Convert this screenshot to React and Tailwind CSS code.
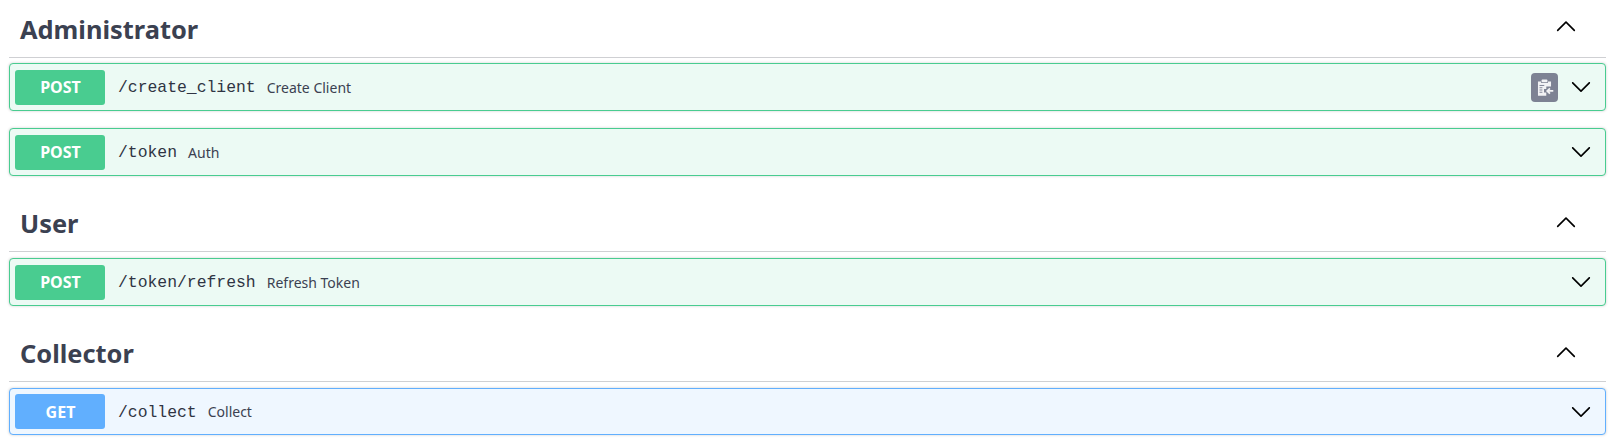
const sans = "font-['Noto_Sans','Noto_Sans_CJK_KR',sans-serif]";

function Chevron({ up, className }) {
  return (
    <svg viewBox="0 0 20 20" className={className} fill="currentColor">
      {up ? (
        <path d="M 17.418 14.908 C 17.69 14.634 17.69 14.19 17.418 13.917 L 10.493 6.992 C 10.22 6.719 9.78 6.719 9.507 6.992 L 2.582 13.917 C 2.31 14.19 2.31 14.634 2.582 14.908 C 2.855 15.18 3.295 15.18 3.568 14.908 L 10 8.48 L 16.432 14.908 C 16.705 15.18 17.145 15.18 17.418 14.908 Z" />
      ) : (
        <path d="M 17.418 6.109 C 17.69 6.383 17.69 6.827 17.418 7.1 L 10.493 14.025 C 10.22 14.298 9.78 14.298 9.507 14.025 L 2.582 7.1 C 2.31 6.827 2.31 6.383 2.582 6.109 C 2.855 5.837 3.295 5.837 3.568 6.109 L 10 12.537 L 16.432 6.109 C 16.705 5.837 17.145 5.837 17.418 6.109 Z" />
      )}
    </svg>
  );
}

function Clip() {
  return (
    <span className="w-[27px] h-[29px] rounded-[4px] bg-[#7d8293] flex items-center justify-center mr-[11px]">
      <svg viewBox="0 0 16 16" className="w-[19px] h-[19px]" fill="none">
        <path d="M2.5 3h2.7v1.2h5.6V3h2.7v4.2H9.5v2H7.6v3h1.9V15H2.500z" fill="#f1f2f4" />
        <rect x="5.6" y="1.2" width="4.8" height="2.4" rx="0.6" fill="#f1f2f4" />
        <path d="M3.800 6.300h4M3.800 8.200h2.400M3.800 10.100h2.400M3.800 12h2.400" stroke="#7d8293" strokeWidth="0.8" />
        <path d="M15.4 10.900h-4.600M12.600 8.700l-2.300 2.200 2.300 2.200" stroke="#f1f2f4" strokeWidth="1.500" />
      </svg>
    </span>
  );
}

function Op({ method, path, desc, copy, mb = "mb-[18px]", h = "h-[48px]" }) {
  const get = method === "GET";
  return (
    <div
      className={`flex items-center pl-[5px] pr-[10px] rounded-[4px] border shadow-[0_0_3px_rgba(0,0,0,0.19)] ${h} ${mb} ${
        get ? "bg-[#eff7ff] border-[#61affe]" : "bg-[#ecfaf4] border-[#49cc90]"
      }`}
    >
      <span
        className={`w-[90px] h-[35px] rounded-[3px] flex items-center justify-center pl-[1px] text-white text-[16px] font-bold ${
          get ? "bg-[#61affe]" : "bg-[#49cc90]"
        }`}
      >
        {method}
      </span>
      <span className="pl-[13px] pr-[11px] font-['Liberation_Mono',monospace] text-[16.4px] font-normal text-[#2f3443] mt-[3px]">
        {path}
      </span>
      <span className="text-[14px] text-[#3b4151] flex-1 whitespace-nowrap">{desc}</span>
      {copy && <Clip />}
      <Chevron className="w-[24px] h-[24px] text-black mr-[2px]" />
    </div>
  );
}

function Tag({ name, children, gap = "mb-[6px]", chevron = "-mt-[4px]" }) {
  return (
    <section>
      <div className={`flex items-center h-[58px] pl-[11px] pr-[28px] border-b border-[#cfd0d3] ${gap}`}>
        <h3 className="flex-1 text-[25.4px] font-bold text-[#3b4151] leading-none mt-[3px]">{name}</h3>
        <Chevron up className={`w-[24px] h-[24px] text-black ${chevron}`} />
      </div>
      {children}
    </section>
  );
}

export default function App() {
  return (
    <div className={`w-[1618px] h-[445px] overflow-hidden bg-white pl-[9px] pr-[12px] ${sans}`}>
      <Tag name="Administrator" gap="mb-[5px]" chevron="-mt-[8px]">
        <Op method="POST" path="/create_client" desc="Create Client" copy mb="mb-[17px]" />
        <Op method="POST" path="/token" desc="Auth" mb="mb-[18px]" />
      </Tag>
      <Tag name="User">
        <Op method="POST" path="/token/refresh" desc="Refresh Token" mb="mb-[18px]" />
      </Tag>
      <Tag name="Collector">
        <Op method="GET" path="/collect" desc="Collect" h="h-[47px]" mb="mb-0" />
      </Tag>
    </div>
  );
}
